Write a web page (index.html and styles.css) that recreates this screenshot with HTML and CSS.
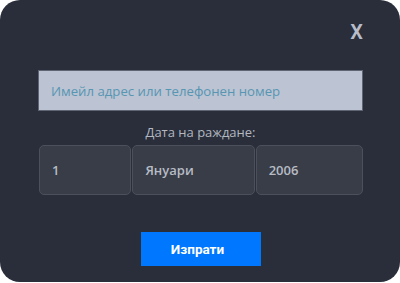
FILE: index.html
```html
<!DOCTYPE html>
<html lang="bg">
<head>
<meta charset="utf-8">
<link rel="stylesheet" href="styles.css">
</head>
<body>
<div class="card">
  <div class="top"><span class="close">X</span></div>
  <input class="contact" type="text" placeholder="Имейл адрес или телефонен номер">
  <div class="label">Дата на раждане:</div>
  <div class="dates">
    <div class="box day">1</div>
    <div class="box month">Януари</div>
    <div class="box year">2006</div>
  </div>
  <div class="actions"><button class="send">Изпрати</button></div>
</div>
</body>
</html>
```
FILE: styles.css
```css
html, body { margin: 0; padding: 0; background: #ffffff; }
body { width: 400px; height: 283px; overflow: hidden; }
.card {
  box-sizing: border-box;
  width: 400px;
  height: 282px;
  background: #292e3a;
  border-radius: 20px;
  padding: 0 37px 0 38px;
  font-family: "Open Sans", "Noto Sans", sans-serif;
  display: flex;
  flex-direction: column;
}
.top { display: flex; justify-content: flex-end; height: 70px; }
.close {
  margin-top: 20px;
  margin-right: 0px;
  color: #b7bcc8;
  font-family: "Roboto", sans-serif;
  font-size: 20px;
  line-height: 24px;
  font-weight: 600;
}
.contact {
  box-sizing: border-box;
  width: 325px;
  height: 41px;
  margin: 0;
  background: #bcc3d2;
  border: 1px solid #5f6572;
  padding: 0 12px;
  font-family: inherit;
  font-size: 13.2px;
  font-weight: 500;
  color: #4a8fae;
  outline: none;
}
.contact::placeholder { color: #5796b2; opacity: 1; }
.label {
  margin-top: 10px;
  text-align: center;
  color: #b3b7c0;
  font-size: 13px;
  line-height: 22px;
}
.dates { display: flex; margin-top: 2px; margin-left: 1px; }
.box {
  box-sizing: border-box;
  height: 50px;
  background: #383d48;
  border: 1px solid #4b505c;
  border-radius: 5px;
  padding-left: 12px;
  display: flex;
  align-items: center;
  color: #b7bbc4;
  font-weight: 600;
  font-size: 13px;
}
.day { width: 93px; }
.month { width: 123px; margin-left: 1px; }
.year { width: 108px; margin-left: 1px; }
.actions { display: flex; justify-content: center; margin-top: 37px; }
.send {
  width: 120px;
  height: 34px;
  margin-left: 1px;
  background: #0077ff;
  border: none;
  color: #ffffff;
  font-family: "Roboto", sans-serif;
  font-weight: 700;
  font-size: 13.5px;
  padding: 0 7px 0 0;
}
```
